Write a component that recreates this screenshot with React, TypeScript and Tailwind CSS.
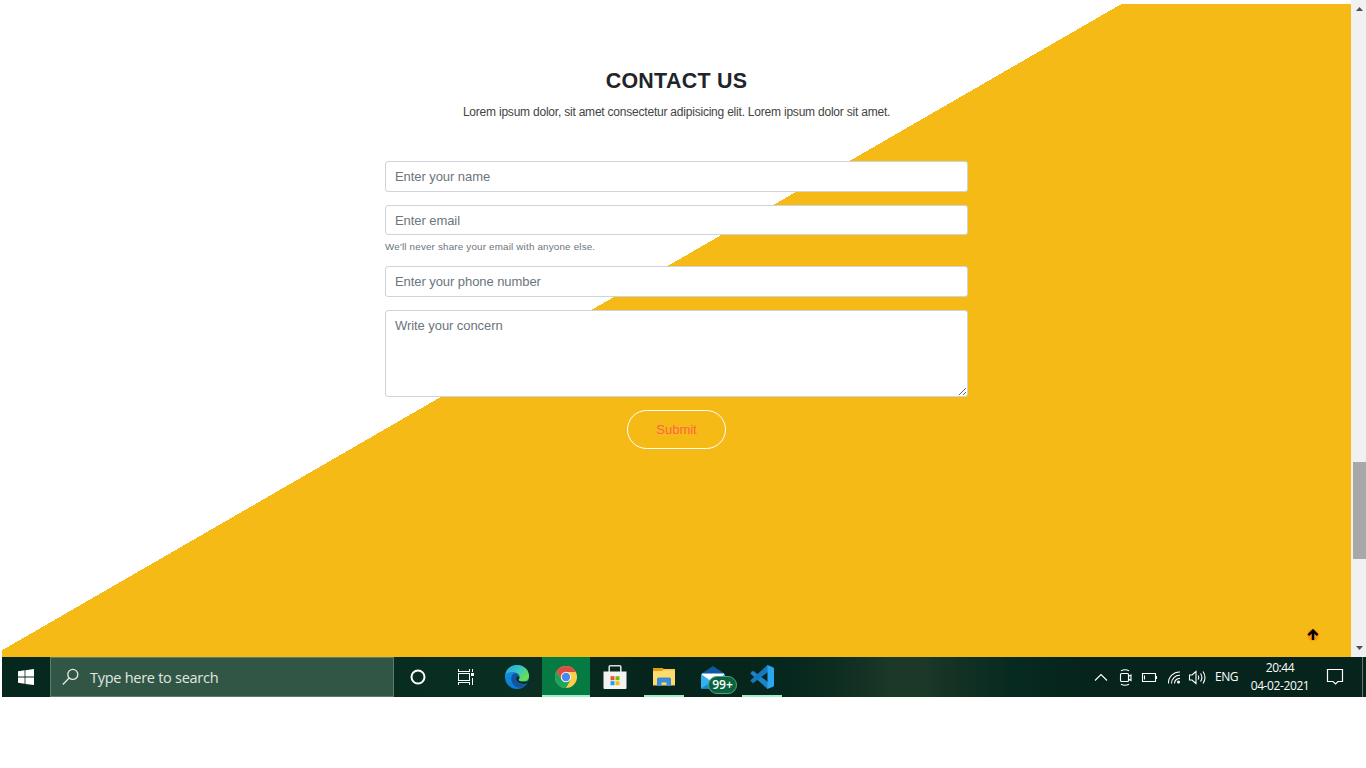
import React from "react";

const field =
  "block w-full rounded-[3px] border border-[#ced4da] bg-white px-[9px] text-[13px] tracking-[-0.07px] text-[#495057] placeholder:text-[#6c757d] placeholder:opacity-100 outline-none";

function Contact() {
  return (
    <section className="relative flex h-[653px] w-[1349px] flex-col items-center bg-[linear-gradient(150deg,#ffffff_559.7px,#f6ba17_559.7px)]">
      <h1 className="mt-[61px] h-8 text-[21.4px] leading-8 font-bold tracking-[0.3px] text-[#212529]">CONTACT US</h1>
      <p className="mt-[6px] h-[18px] text-[12px] leading-[18px] tracking-[-0.215px] text-[#444]">
        Lorem ipsum dolor, sit amet consectetur adipisicing elit. Lorem ipsum dolor sit amet.
      </p>
      <form className="mt-[40px] flex w-[583px] flex-col items-center" onSubmit={(e) => e.preventDefault()}>
        <input className={field + " h-[31px]"} placeholder="Enter your name" />
        <input className={field + " mt-[13px] h-[30px]"} placeholder="Enter email" />
        <small className="mt-[4px] h-[15px] w-full text-[9.8px] leading-[15px] tracking-[0.19px] text-[#6c757d]">
          We'll never share your email with anyone else.
        </small>
        <input className={field + " mt-[12px] h-[31px]"} placeholder="Enter your phone number" />
        <textarea className={field + " mt-[13px] h-[87px] resize pt-[5px] leading-[20px]"} placeholder="Write your concern" />
        <button className="mt-[13px] h-[39px] w-[99px] rounded-[20px] border border-white text-[13px] text-[#ff6347]">
          Submit
        </button>
      </form>
      <a className="absolute top-[625px] left-[1305px] size-3 rounded-full bg-[#ff9800]" aria-label="Back to top">
        <svg viewBox="0 0 12 12" className="size-3">
          <path d="M6 11V2M1.4 6.200 6 1.600l4.600 4.600" fill="none" stroke="#000" strokeWidth="2.500" />
        </svg>
      </a>
    </section>
  );
}

function Scrollbar() {
  return (
    <div className="flex h-[657px] w-[15px] flex-col items-end bg-[#f1f1f1]">
      <svg viewBox="0 0 13 462" className="h-[462px] w-[13px]">
        <path d="M3 11h7L6.500 7z" fill="#505050" />
      </svg>
      <div className="h-[97px] w-[13px] bg-[#a8a8a8]" />
      <svg viewBox="0 0 13 98" className="h-[98px] w-[13px]">
        <path d="M3 87h7L6.500 91z" fill="#505050" />
      </svg>
    </div>
  );
}

function Slot({ children, line, active }: { children: React.ReactNode; line?: boolean; active?: boolean }) {
  return (
    <div className={"flex h-10 w-12 shrink-0 flex-col items-center " + (active ? "bg-[#057a43]" : "")}>
      <div className="flex h-[38px] items-center pt-[2px]">{children}</div>
      {active ? <div className="h-[2px] w-12 bg-[#9cf0c4]" /> : line ? <div className="h-[2px] w-10 bg-[#9cf0c4]" /> : null}
    </div>
  );
}

function Taskbar() {
  return (
    <footer className="ml-[2px] flex h-10 w-[1364px] bg-[linear-gradient(90deg,#06271e_0px,#0a2e22_540px,#06241b_640px,#06271d_790px,#112f22_850px,#1b3828_890px,#1b3828_920px,#123124_960px,#072a20_1010px,#06241b_1080px,#06241b_1364px)] text-white">
      <div className="flex w-12 items-center justify-center">
        <svg viewBox="0 0 16 16" className="size-4" fill="#fff">
          <path d="M0 2.300 6.600 1.300V7.600H0zM7.400 1.200 16 0V7.600H7.400zM0 8.400H6.600V14.700L0 13.800zM7.400 8.400H16V16L7.400 14.900z" />
        </svg>
      </div>
      <div className="flex h-10 w-[344px] items-center border border-[#5b7d6b] bg-[#325645] pl-[11px]">
        <svg viewBox="0 0 17 18" className="h-[18px] w-[17px]" fill="none" stroke="#e4ebe7" strokeWidth="1.300">
          <circle cx="10.800" cy="6.400" r="5" />
          <path d="M7.200 10 .8 16.500" />
        </svg>
        <span className="ml-[11px] pt-px font-['Open_Sans','Noto_Sans',sans-serif] text-[14.5px] tracking-[-0.27px] text-[#e0e7e3]">
          Type here to search
        </span>
      </div>
      <Slot>
        <svg viewBox="0 0 16 16" className="size-4"><circle cx="8" cy="8" r="6.500" fill="none" stroke="#fff" strokeWidth="2" /></svg>
      </Slot>
      <Slot>
        <svg viewBox="0 0 16 16" className="size-4" fill="none" stroke="#fff" shapeRendering="crispEdges">
          <path d="M.5 4.500h11v7H.5zM.5 0v2.500h11V0M.5 16v-2.500h11V16M14.500 0v3M14.500 8.500V16" />
          <path d="M13 4h3v3h-3z" fill="#fff" stroke="none" />
        </svg>
      </Slot>
      <div className="w-[3px]" />
      <Slot>
        <svg viewBox="0 0 24 24" className="size-6">
          <defs>
            <linearGradient id="e1" x1="0" y1="0" x2="1" y2=".7"><stop stopColor="#249fe0" /><stop offset=".5" stopColor="#35c5c9" /><stop offset="1" stopColor="#6fe33f" /></linearGradient>
            <linearGradient id="e2" x1="0" y1="0" x2=".5" y2="1"><stop stopColor="#1794dc" /><stop offset="1" stopColor="#087bd4" /></linearGradient>
          </defs>
          <circle cx="12" cy="12" r="12" fill="url(#e2)" />
          <path d="M.3 9.500C1.500 3.500 6 0 12 0c7 0 12 5 12 10.800 0 4-3 5.800-6.200 5.800-3 0-4.200-1-4.200-1.900 0-.7.900-1.200.9-2.700 0-2.500-3-5-6.500-5C4.500 7 2 7.600.3 9.500z" fill="url(#e1)" />
          <path d="M8 9c-3 3-2.500 10 4 13.300 4 1.300 7.500-.6 10.100-3.800-4 2-8.500.5-10-2.500-1.500-3 .1-5 2.400-4.500C14 8.800 11 7 8 9z" fill="#14539b" />
          <path d="M11.300 12.500c-.8 3.500 3 6.500 7 6.500 2 0 3.200-.5 4.500-1.300l1.200.8V15.500c-1.500 1-3.500 1.200-6.200 1.100-3 0-4.200-1-4.200-1.900 0-.7.900-1.200.9-2.700-.8-.7-2.500-.8-3.200.5z" fill="#092b21" />
        </svg>
      </Slot>
      <div className="w-px" />
      <Slot active>
        <svg viewBox="0 0 22 22" className="size-[22px]">
          <circle cx="11" cy="11" r="11" fill="#ffcd46" />
          <path d="M11 6h9.800A11 11 0 0 0 1.470 5.500L6.500 13.500z" fill="#df4d40" />
          <path d="M1.470 5.500A11 11 0 0 0 11 22l4.500-8L6.700 13.500z" fill="#1fa45e" />
          <circle cx="11" cy="11" r="5.200" fill="#f4f4f4" /><circle cx="11" cy="11" r="4.200" fill="#4c87ee" />
        </svg>
      </Slot>
      <Slot>
        <svg viewBox="0 0 24 24" className="ml-px size-6">
          <path d="M6.200 7V1.800Q6.200.8 7.200.8h9.600q1 0 1 1V7" fill="none" stroke="#d9dcdc" strokeWidth="1.600" />
          <path d="M.5 6.500h23V23q0 1-1 1h-21q-1 0-1-1z" fill="#f3f3f3" />
          <path d="M7.500 11.200h4v4h-4z" fill="#f2502a" /><path d="M12.500 11.200h4v4h-4z" fill="#7eb809" />
          <path d="M7.500 16.200h4v4h-4z" fill="#11a3e9" /><path d="M12.500 16.200h4v4h-4z" fill="#fdb90a" />
        </svg>
      </Slot>
      <div className="w-[2px]" />
      <Slot line>
        <svg viewBox="0 0 22 18" className="h-[18px] w-[22px]">
          <path d="M0 0h9.500l1 1H22v16.500H0z" fill="#f9cd55" /><path d="M0 0h9.500l1 1.500-1.500 1.500H0z" fill="#df9d13" />
          <path d="M0 3h22v13.500H0z" fill="#ffda6c" />
          <path d="M4 18v-7q0-1.500 1.500-1.500h11q1.500 0 1.500 1.500v7h-4.500v-3.500h-5V18z" fill="#3b8dd7" />
        </svg>
      </Slot>
      <div className="w-px" />
      <Slot>
        <div className="relative">
          <svg viewBox="0 0 24 23" className="h-[23px] w-6">
            <path d="m12 0 12 8v14.500H0V8z" fill="#1158a4" /><path d="M1 7.500h22V16H1z" fill="#fff" />
            <path d="M0 8l12 8.500L24 8v14.500H0z" fill="#33b2ed" /><path d="M0 22.500 15 13l3 9.500z" fill="#1788d5" />
          </svg>
          <span className="absolute top-[10px] left-[7px] flex h-[18px] w-[29px] items-center justify-center rounded-full border border-[#5d9c7c] bg-[#07633d] font-['Open_Sans',sans-serif] text-[12px] font-semibold">
            99+
          </span>
        </div>
      </Slot>
      <div className="w-px" />
      <Slot line>
        <svg viewBox="0 0 24 24" className="size-6">
          <path d="m.5 8 2-1.800Q3 5.800 3.600 6.200L18 17v7h-.5L.8 9z" fill="#1c84ca" />
          <path d="m.5 16 2 1.800q.5.400 1.100 0L18 7V0h-.5L.8 15z" fill="#1679be" />
          <path d="M17.500 0 23 2.300q1 .5 1 1.500v16.400q0 1-1 1.500L17.500 24z" fill="#2aa5ef" />
        </svg>
      </Slot>
      <div className="flex-1" />
      <div className="flex w-[279px] items-center">
        <svg viewBox="0 0 120 24" className="h-6 w-[120px]" fill="none" stroke="#fff" strokeWidth="1.100">
          <path d="m8 15.500 6-6 6 6" />
          <path d="M34.500 8.500h6q1 0 1 1v6q0 1-1 1h-6q-1 0-1-1v-6q0-1 1-1zM41.500 11.500l2.500-1.500v5.500l-2.500-1.500M34 5.800q4-2 8 0M34 19.200q4 2 8 0" />
          <path d="M55.500 8.500h13v8h-13zM57.500 10.500v4M69.500 11v3" />
          <path d="M81.500 18.500A11 11 0 0 1 93 7M84.500 18.500A8 8 0 0 1 93 10.300M87.500 18.500A5 5 0 0 1 93 13.500" />
          <circle cx="91.500" cy="17" r="1.500" fill="#fff" stroke="none" />
          <path d="M102.500 10h2.500l4-3.500v12L105 15h-2.500zM111 10.500q1.500 2 0 4M113.500 8.500q2.800 4 0 8M116 6.500q4 6 0 12" />
        </svg>
        <span className="ml-[8px] w-[25px] font-['Open_Sans','Noto_Sans',sans-serif] text-[12px] tracking-[-0.5px]">ENG</span>
        <div className="ml-[9px] w-[62px] text-center font-['Open_Sans','Noto_Sans',sans-serif] text-[12px] leading-[18px] tracking-[-0.4px] whitespace-nowrap">
          <div>20:44</div>
          <div>04-02-2021</div>
        </div>
        <svg viewBox="0 0 18 18" className="ml-[15px] size-[18px]" fill="none" stroke="#fff" strokeWidth="1.200">
          <path d="M1.500 1.500h15v12H12l-2.500 2.500L7 13.500H1.500z" />
        </svg>
        <div className="ml-[18px] h-10 w-px bg-[#647b71]" />
      </div>
    </footer>
  );
}

export default function App() {
  return (
    <div className="h-[768px] w-[1366px] overflow-hidden bg-white font-['Liberation_Sans',Arial,sans-serif]">
      <div className="flex h-[657px] items-end pl-[2px]">
        <Contact />
        <Scrollbar />
      </div>
      <Taskbar />
    </div>
  );
}
